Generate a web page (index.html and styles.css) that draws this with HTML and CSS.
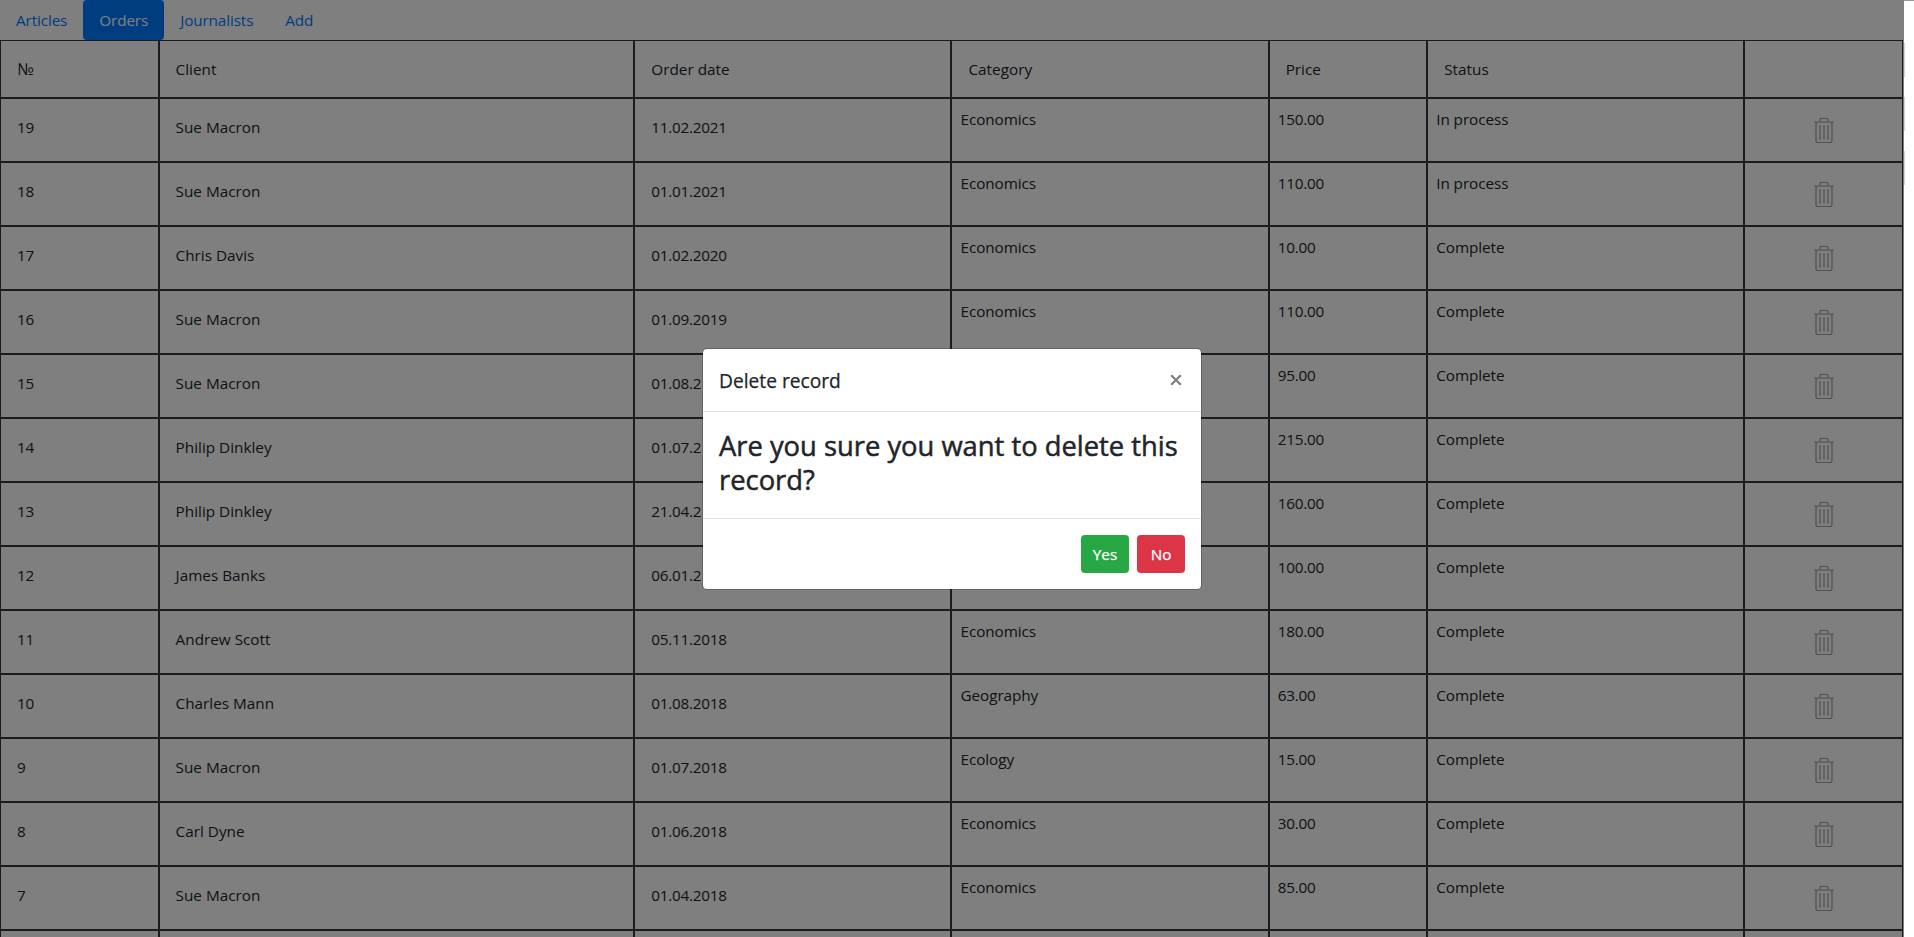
FILE: index.html
```html
<!DOCTYPE html>
<html lang="en">
<head>
<meta charset="utf-8">
<title>Orders</title>
<link rel="stylesheet" href="styles.css">
</head>
<body>
<svg class="defs" width="0" height="0"><symbol id="trash" viewBox="0 0 20 26"><path d="M0 4.5H20M6 4.5V2Q6 1 7 1H13Q14 1 14 2V4.500M2 4.500V23Q2 25 4 25H16Q18 25 18 23V4.500M6 7.500V22M10 7.500V22M14 7.500V22"/></symbol></svg>
<div class="page">
<nav class="nav"><a class="link">Articles</a><a class="link active">Orders</a><a class="link">Journalists</a><a class="link">Add</a></nav>
<div class="table" id="table">
<div class="row head"><div class="cell"><span class="num">№</span></div><div class="cell"><span>Client</span></div><div class="cell"><span>Order date</span></div><div class="cell"><span>Category</span></div><div class="cell"><span>Price</span></div><div class="cell"><span>Status</span></div><div class="cell"></div></div>
</div>
<div class="backdrop"></div>
</div>
<div class="side"><i class="mark"></i><i class="mark"></i><i class="mark"></i></div>
<div class="modal" role="dialog">
<div class="modal-header"><h5 class="title"><span>Delete record</span></h5><span class="close"><svg width="12" height="12" viewBox="0 0 12 12"><path d="M1.200 1.200L10.800 10.800M10.800 1.200L1.200 10.800"/></svg></span></div>
<div class="modal-body"><h3 class="question">Are you sure you want to delete this record?</h3></div>
<div class="modal-footer"><button class="btn yes">Yes</button><button class="btn no">No</button></div>
</div>
<script src="rows.js"></script>
</body>
</html>
```
FILE: styles.css
```css
* { box-sizing: border-box; }
body { margin: 0; height: 937px; overflow: hidden; position: relative; display: flex; background: #fff; color: #212529; font: 15.3px/24px "Open Sans", "Noto Sans", sans-serif; }
.defs { position: absolute; }
.page { position: relative; width: 1904px; height: 937px; overflow: hidden; }
.nav { display: flex; height: 40px; letter-spacing: -0.13px; }
.link { padding: 8px 16px; color: #007bff; border-radius: 4px; }
.link.active { background: #007bff; color: #fff; }
.table { width: 1903px; }
.row { display: grid; grid-template-columns: 1fr 3fr 2fr 2fr 1fr 2fr 1fr; height: 64px; }
.row.head { height: 58px; }
.cell { border: 1px solid #343a40; padding: 16px; min-width: 0; white-space: nowrap; }
.cell.tight { padding: 8px; letter-spacing: -0.08px; }
.cell.digits { letter-spacing: -0.25px; }
.num { font-size: 16.5px; }
.cell.action { padding: 18px 0 0 1px; text-align: center; line-height: 0; }
.trash { width: 20px; height: 27px; fill: none; stroke: #a0a0a0; stroke-width: 1.2; }
.backdrop { position: absolute; inset: 0; background: rgba(0, 0, 0, .5); }
.side { width: 10px; border-top: 1px solid #999; padding-top: 42px; display: flex; flex-direction: column; gap: 20px; }
.mark { width: 1px; height: 34px; background: #ced4da; }
.modal { position: absolute; left: 702px; top: 348px; width: 500px; height: 242px; background: #fff; border: 1px solid rgba(0, 0, 0, .2); background-clip: padding-box; border-radius: 5px; }
.modal-header { display: flex; justify-content: space-between; height: 63px; padding: 16px; border-bottom: 1px solid #dee2e6; }
.title { margin: 0; padding-top: 1px; font-size: 19.2px; line-height: 30px; font-weight: 500; -webkit-text-stroke: .25px #212529; }
.close { padding: 9px 3px 0 0; line-height: 0; }
.close svg { fill: none; stroke: #808080; stroke-width: 2.200; }
.modal-body { height: 107px; padding: 17px 0 0 16px; border-bottom: 1px solid #dee2e6; }
.question { margin: 0; font-size: 27.35px; line-height: 33.6px; font-weight: 500; -webkit-text-stroke: .5px #212529; }
.modal-footer { display: flex; justify-content: flex-end; gap: 8px; padding: 16px; }
.btn { width: 48px; height: 38px; border: 0; border-radius: 4px; padding: 0; color: #fff; font: 500 15.3px/24px "Open Sans", "Noto Sans", sans-serif; -webkit-text-stroke: .25px #fff; }
.yes { background: #28a745; }
.no { background: #dc3545; }
```
FILE: rows.js
```js
const orders = [
  [19, 'Sue Macron', '11.02.2021', 'Economics', '150.00', 'In process'],
  [18, 'Sue Macron', '01.01.2021', 'Economics', '110.00', 'In process'],
  [17, 'Chris Davis', '01.02.2020', 'Economics', '10.00', 'Complete'],
  [16, 'Sue Macron', '01.09.2019', 'Economics', '110.00', 'Complete'],
  [15, 'Sue Macron', '01.08.2', '', '95.00', 'Complete'],
  [14, 'Philip Dinkley', '01.07.2', '', '215.00', 'Complete'],
  [13, 'Philip Dinkley', '21.04.2', '', '160.00', 'Complete'],
  [12, 'James Banks', '06.01.2', '', '100.00', 'Complete'],
  [11, 'Andrew Scott', '05.11.2018', 'Economics', '180.00', 'Complete'],
  [10, 'Charles Mann', '01.08.2018', 'Geography', '63.00', 'Complete'],
  [9, 'Sue Macron', '01.07.2018', 'Ecology', '15.00', 'Complete'],
  [8, 'Carl Dyne', '01.06.2018', 'Economics', '30.00', 'Complete'],
  [7, 'Sue Macron', '01.04.2018', 'Economics', '85.00', 'Complete'],
  ['', '', '', '', '', '']
];
document.getElementById('table').insertAdjacentHTML('beforeend', orders.map(o =>
  '<div class="row">' + o.map((v, i) => `<div class="cell${i > 2 ? ' tight' : ''}${i === 0 || i === 2 || i === 4 ? ' digits' : ''}"><span>${v}</span></div>`).join('') +
  '<div class="cell action">' + (o[0] ? '<svg class="trash"><use href="#trash"/></svg>' : '') + '</div></div>').join(''));
```
